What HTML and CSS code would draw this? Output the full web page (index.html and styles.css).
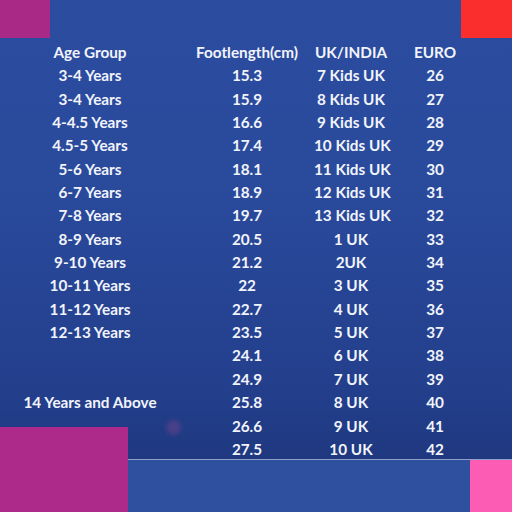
FILE: index.html
```html
<!DOCTYPE html>
<html>
<head>
<meta charset="utf-8">
<link rel="stylesheet" href="styles.css">
</head>
<body>
<div class="page">
  <div class="deco tl"></div>
  <div class="deco tr"></div>
  <div class="deco bl"></div>
  <div class="deco br"></div>
  <div class="dot"></div>
  <div class="main">
    <div class="chart">
      <div class="h">Age Group</div><div class="h">Footlength(cm)</div><div class="h">UK/INDIA</div><div class="h">EURO</div>
      <div>3-4 Years</div><div>15.3</div><div>7 Kids UK</div><div>26</div>
      <div>3-4 Years</div><div>15.9</div><div>8 Kids UK</div><div>27</div>
      <div>4-4.5 Years</div><div>16.6</div><div>9 Kids UK</div><div>28</div>
      <div>4.5-5 Years</div><div>17.4</div><div>10 Kids UK</div><div>29</div>
      <div>5-6 Years</div><div>18.1</div><div>11 Kids UK</div><div>30</div>
      <div>6-7 Years</div><div>18.9</div><div>12 Kids UK</div><div>31</div>
      <div>7-8 Years</div><div>19.7</div><div>13 Kids UK</div><div>32</div>
      <div>8-9 Years</div><div>20.5</div><div>1 UK</div><div>33</div>
      <div>9-10 Years</div><div>21.2</div><div>2UK</div><div>34</div>
      <div>10-11 Years</div><div>22</div><div>3 UK</div><div>35</div>
      <div>11-12 Years</div><div>22.7</div><div>4 UK</div><div>36</div>
      <div>12-13 Years</div><div>23.5</div><div>5 UK</div><div>37</div>
      <div></div><div>24.1</div><div>6 UK</div><div>38</div>
      <div></div><div>24.9</div><div>7 UK</div><div>39</div>
      <div>14 Years and Above</div><div>25.8</div><div>8 UK</div><div>40</div>
      <div></div><div>26.6</div><div>9 UK</div><div>41</div>
      <div></div><div>27.5</div><div>10 UK</div><div>42</div>
    </div>
  </div>
  <div class="band"></div>
</div>
</body>
</html>
```
FILE: styles.css
```css
html, body {
  margin: 0;
  padding: 0;
}
.page {
  position: relative;
  width: 512px;
  height: 512px;
  overflow: hidden;
  display: flex;
  flex-direction: column;
  font-family: Lato, "Open Sans", sans-serif;
  font-weight: 700;
  color: #f2f4fb;
}
.main {
  height: 459px;
  background: linear-gradient(180deg, #2b4c9f 0%, #2a4a9c 40%, #233f8c 85%, #1f3880 100%);
  box-sizing: border-box;
  padding-top: 41px;
}
.band {
  height: 53px;
  background: #2f4f9f;
  border-top: 1px solid #8ea0cc;
  box-sizing: border-box;
}
.chart {
  display: grid;
  grid-template-columns: 180px 134px 74px 94px;
  grid-auto-rows: 23.35px;
  line-height: 23.35px;
  font-size: 15.3px;
  text-align: center;
  white-space: nowrap;
}
.deco {
  position: absolute;
  z-index: 2;
}
.tl {
  left: 0; top: 0; width: 50px; height: 38px;
  background: #a82a86;
}
.tr {
  left: 461px; top: 0; width: 51px; height: 38px;
  background: #fb2e2e;
}
.bl {
  left: 0; top: 427px; width: 128px; height: 85px;
  background: #ad2a8b;
}
.br {
  left: 470px; top: 460px; width: 42px; height: 52px;
  background: #fd5cb5;
}
.dot {
  position: absolute;
  left: 166px; top: 420px; width: 15px; height: 15px;
  border-radius: 50%;
  background: rgba(120, 70, 140, 0.45);
  filter: blur(2px);
  z-index: 1;
}
```
